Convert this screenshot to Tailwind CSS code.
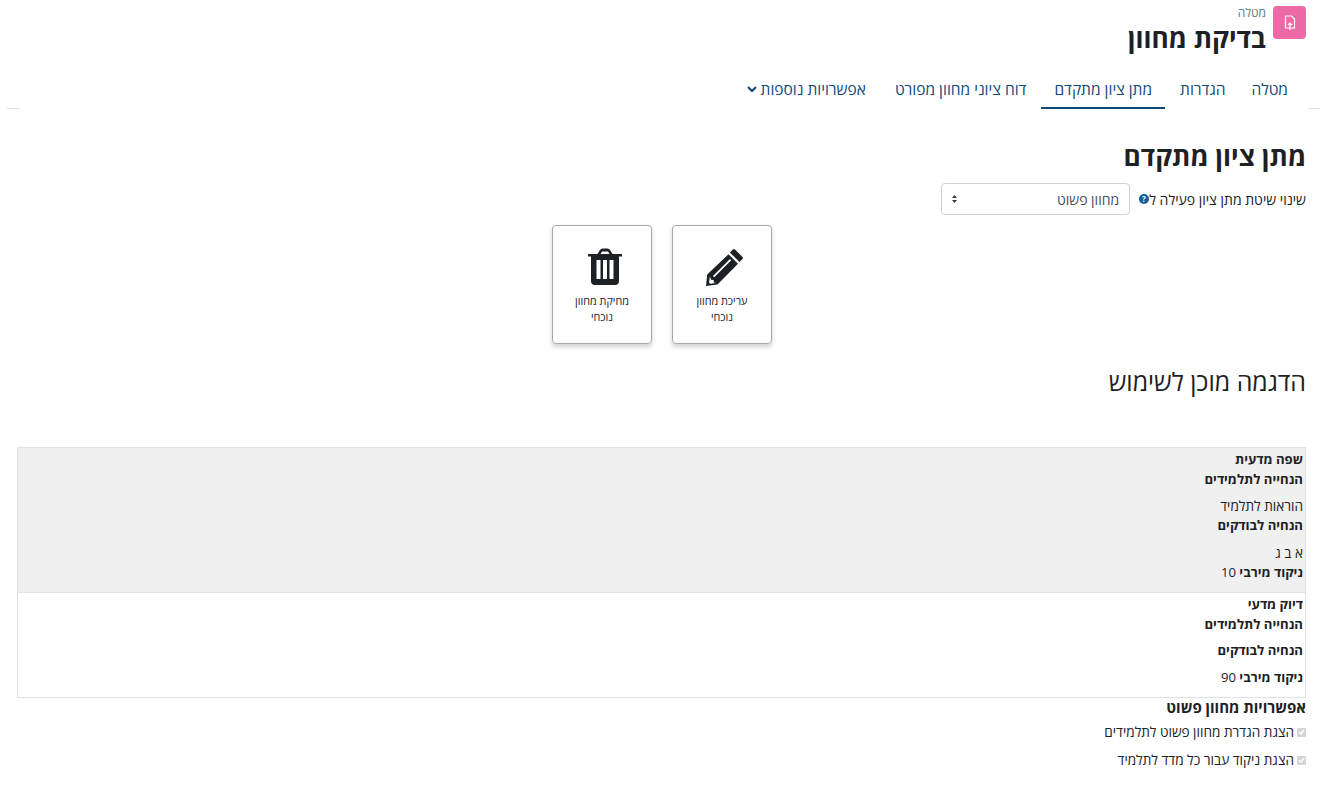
<!DOCTYPE html>
<html lang="he" dir="rtl">
<head>
    <meta charset="UTF-8">
    <title>בדיקת מחוון</title>
    <script src="https://cdn.jsdelivr.net/npm/@tailwindcss/browser@4"></script>
</head>
<body class="bg-white text-[#1d2125] font-['Open_Sans','Noto_Sans',sans-serif] text-[14px] overflow-hidden h-[794px]">
    <!-- header -->
    <div class="pr-[22px] pt-[6px] flex gap-[7px] h-[72px]">
        <div class="w-[33px] h-[33px] rounded bg-[#ee6aa6] flex items-center justify-center">
            <svg width="12" height="16" viewBox="0 0 12 16" fill="none" stroke="#fff" stroke-width="1.2">
                <path d="M1.500 1h6l3 3v9h-9z" />
                <path d="M6 15V8M4 10l2-2 2 2" />
            </svg>
        </div>
        <div>
            <div class="text-[12px] leading-[13px] text-[#6a737b]">מטלה</div>
            <h1 class="text-[26.25px] leading-[38px] font-bold">בדיקת מחוון</h1>
        </div>
    </div>

    <!-- tabs -->
    <div class="relative h-[37px] flex pr-[22px] text-[15.5px] text-[#0f4a7b]">
        <div class="absolute bottom-0 right-[8px] w-[12px] h-px bg-[#dee2e6]"></div>
        <div class="absolute bottom-0 left-[7px] w-[13px] h-px bg-[#dee2e6]"></div>
        <a class="pr-[18px] pl-[11px] pt-[6px]">מטלה</a>
        <a class="px-[15px] pt-[6px]">הגדרות</a>
        <a class="px-[13px] pt-[6px] border-b-2 border-[#0f4a7b]">מתן ציון מתקדם</a>
        <a class="pr-[15px] pl-[14px] pt-[6px]">דוח ציוני מחוון מפורט</a>
        <a class="px-[15px] pt-[6px] flex items-start gap-[4px]">אפשרויות נוספות
            <svg class="mt-[8px]" width="10" height="7" viewBox="0 0 10 7" fill="none" stroke="#0f4a7b" stroke-width="2.2"><path d="M1 1l4 4 4-4" /></svg>
        </a>
    </div>

    <!-- main -->
    <div class="pr-[22px] pl-[17px]">
        <h2 class="text-[26.25px] leading-[30px] font-bold mt-[32px]">מתן ציון מתקדם</h2>
        <div class="flex items-center mt-[12px] h-[32px]">
            <span>שינוי שיטת מתן ציון פעילה ל</span>
            <svg width="10" height="10" viewBox="0 0 10 10"><circle cx="5" cy="5" r="5" fill="#115f9d" /><text x="5" y="8" text-anchor="middle" font-size="8" font-weight="700" fill="#fff">?</text></svg>
            <div class="mr-[9px] w-[189px] h-[32px] border border-[#ced4da] rounded flex items-center justify-between pr-[10px] pl-[10px] text-[#495057]">
                <span>מחוון פשוט</span>
                <svg width="5" height="8" viewBox="0 0 5 8" fill="#343a40"><path d="M2.500 0L5 3H0zM2.500 8L0 5h5z" /></svg>
            </div>
        </div>

        <!-- action cards -->
        <div class="flex justify-center gap-[20px] mt-[10px] pl-[1px]">
            <div class="w-[100px] h-[119px] border border-[#a8a8a8] rounded-[4px] shadow-[0_3px_5px_rgba(0,0,0,0.18)] flex flex-col items-center pt-[22px] px-[18px]">
                <svg class="translate-x-[3px]" width="38" height="38" viewBox="0 0 38 38" fill="#1d2125">
                    <path d="M29 1.500l7.500 7.500a1.500 1.500 0 0 1 0 2.100l-3 3-9.600-9.600 3-3a1.500 1.500 0 0 1 2.100 0z" />
                    <path fill-rule="evenodd" d="M22.500 6.300l9.500 9.500L11.500 36.500 0 38l1.200-11.600zM24 11L7 28l1.200 1.200 17-17zM3.800 28.500l-.7 6.200 1 1 5.900-.8-2.200-.4-.2-2.500-2.400-.2z" />
                </svg>
                <div class="mt-[7px] text-[10.8px] leading-[16px] text-center">עריכת מחוון נוכחי</div>
            </div>
            <div class="w-[100px] h-[119px] border border-[#a8a8a8] rounded-[4px] shadow-[0_3px_5px_rgba(0,0,0,0.18)] flex flex-col items-center pt-[22px] px-[18px]">
                <svg class="translate-x-[3px]" width="34" height="38" viewBox="0 0 34 38" fill="#1d2125">
                    <path d="M0 6h9.500l2.500-4a3 3 0 0 1 2.500-1.500h5a3 3 0 0 1 2.500 1.500l2.500 4H34v2.500h-3V33a4 4 0 0 1-4 4H7a4 4 0 0 1-4-4V8.500H0zM12.500 6h9l-1.500-2.500h-6z" />
                    <path fill="#fff" d="M8.500 12h4v19h-4zM15 12h4v19h-4zM21.500 12h4v19h-4z" />
                </svg>
                <div class="mt-[7px] text-[10.8px] leading-[16px] text-center">מחיקת מחוון נוכחי</div>
            </div>
        </div>

        <h3 class="text-[24.9px] leading-[30px] mt-[22px] font-normal">הדגמה מוכן לשימוש</h3>

        <!-- rubric table -->
        <div class="mt-[51px] border border-[#dee2e6] text-[13.15px] leading-[19.7px]">
            <div class="bg-[#f0f0f0] pr-[2px] pt-[2px] h-[145px] border-b border-[#dee2e6]">
                <div class="font-bold">שפה מדעית</div>
                <div class="font-bold">הנחייה לתלמידים</div>
                <div class="mt-[7px] text-[13.6px]">הוראות לתלמיד</div>
                <div class="font-bold">הנחיה לבודקים</div>
                <div class="mt-[7px] text-[13.6px]">א ב ג</div>
                <div><b>ניקוד מירבי</b> 10</div>
            </div>
            <div class="pr-[2px] pt-[2px] h-[104px]">
                <div class="font-bold">דיוק מדעי</div>
                <div class="font-bold">הנחייה לתלמידים</div>
                <div class="font-bold mt-[7px]">הנחיה לבודקים</div>
                <div class="mt-[7px]"><b>ניקוד מירבי</b> 90</div>
            </div>
        </div>

        <div class="font-bold text-[15px] leading-[18px]">אפשרויות מחוון פשוט</div>
        <label class="flex items-center gap-[3px] mt-[6px] h-[20px] text-[13.6px]">
            <span class="w-[9px] h-[9px] rounded-[1px] bg-[#d5d5d5] flex items-center justify-center">
                <svg width="7" height="6" viewBox="0 0 7 6" fill="none" stroke="#fff" stroke-width="1.300"><path d="M.8 3l2 2L6.200 1" /></svg>
            </span>הצגת הגדרת מחוון פשוט לתלמידים
        </label>
        <label class="flex items-center gap-[3px] mt-[8px] h-[20px] text-[13.6px]">
            <span class="w-[9px] h-[9px] rounded-[1px] bg-[#d5d5d5] flex items-center justify-center">
                <svg width="7" height="6" viewBox="0 0 7 6" fill="none" stroke="#fff" stroke-width="1.300"><path d="M.8 3l2 2L6.200 1" /></svg>
            </span>הצגת ניקוד עבור כל מדד לתלמיד
        </label>
    </div>
</body>
</html>
